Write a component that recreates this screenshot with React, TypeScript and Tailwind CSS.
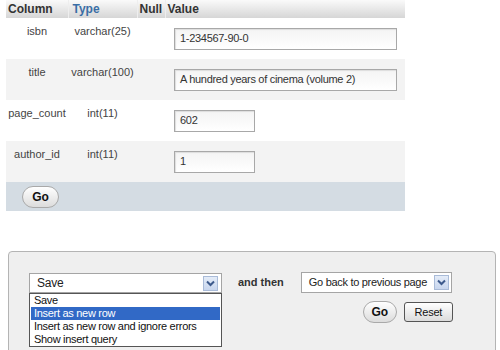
import React from "react";

const font = { fontFamily: '"Liberation Sans", Arial, sans-serif' };

function Chevron() {
  return (
    <span className="flex h-[15px] w-[15px] shrink-0 items-center justify-center border border-[#a9bbd8] bg-gradient-to-b from-[#e4ecf8] to-[#c8d6ee]">
      <svg width="9" height="7" viewBox="0 0 9 7">
        <path d="M1 1.5 L4.5 5 L8 1.5" stroke="#3d5a8c" strokeWidth="2" fill="none" />
      </svg>
    </span>
  );
}

function Row({ name, type, value, wide, shade }: { name: string; type: string; value: string; wide: boolean; shade: boolean }) {
  return (
    <tr className={shade ? "bg-[#f3f3f3]" : "bg-white"}>
      <td className="h-[41px] pt-[5px] align-top text-center text-[#444]">{name}</td>
      <td className="pt-[5px] align-top text-center text-[#444]">{type}</td>
      <td></td>
      <td className="pl-[9px] align-middle">
        <div
          className={`flex h-[22px] items-center border border-[#a8a8a8] bg-gradient-to-b from-[#f4f4f4] to-white pl-[5px] tracking-[-0.3px] text-[#333] shadow-[inset_1px_1px_1px_#ddd] ${wide ? "w-[223px]" : "w-[81px]"}`}
        >
          {value}
        </div>
      </td>
    </tr>
  );
}

export default function App() {
  return (
    <div className="h-[350px] w-[500px] overflow-hidden bg-white text-[11px]" style={font}>
      <table className="ml-[6px] w-[399px] table-fixed border-collapse">
        <colgroup>
          <col className="w-[62px]" />
          <col className="w-[69px]" />
          <col className="w-[28px]" />
          <col className="w-[240px]" />
        </colgroup>
        <thead>
          <tr className="h-[17px] bg-gradient-to-b from-[#fafafa] to-[#d6d6d6] text-[12px] font-bold">
            <th className="border-r border-[#eee] pl-[2px] text-left text-[#333]">Column</th>
            <th className="border-r border-[#eee] pl-[4px] text-left text-[#3a6ea5]">Type</th>
            <th className="border-r border-[#eee] pl-[2px] text-left text-[#333]">Null</th>
            <th className="pl-[2px] text-left text-[#333]">Value</th>
          </tr>
        </thead>
        <tbody>
          <Row name="isbn" type="varchar(25)" value="1-234567-90-0" wide shade={false} />
          <Row name="title" type="varchar(100)" value="A hundred years of cinema (volume 2)" wide shade />
          <Row name="page_count" type="int(11)" value="602" wide={false} shade={false} />
          <Row name="author_id" type="int(11)" value="1" wide={false} shade />
          <tr className="bg-[#d4dce3]">
            <td colSpan={4} className="h-[29px] pl-[16px]">
              <button className="flex h-[22px] w-[37px] items-center justify-center rounded-full border border-[#a9a9a9] bg-gradient-to-b from-white to-[#dcdcdc] text-[12px] font-bold text-[#111]">
                Go
              </button>
            </td>
          </tr>
        </tbody>
      </table>

      <div className="ml-[8px] mt-[40px] h-[110px] w-[488px] rounded-[4px] border border-[#b4b4b4] bg-[#efefef]">
        <div className="flex pl-[20px] pt-[20px]">
          <div className="relative">
            <div className="mt-[1px] flex h-[20px] w-[193px] items-center justify-between border border-[#a5a5a5] bg-white pl-[7px] pr-[3px] text-[12px] tracking-[-0.2px] text-[#222]">
              <span>Save</span>
              <Chevron />
            </div>
            <div className="absolute left-0 top-[21px] w-[193px] whitespace-nowrap border border-[#555] bg-white px-[1px] text-[11px] leading-[13px] tracking-[-0.3px] text-[#111]">
              <div className="pl-[3px]">Save</div>
              <div className="bg-[#3169c6] pl-[3px] text-white">Insert as new row</div>
              <div className="pl-[3px]">Insert as new row and ignore errors</div>
              <div className="pl-[3px]">Show insert query</div>
            </div>
          </div>
          <div className="ml-[16px] pt-[2px] text-[11px] font-bold text-[#333]">and then</div>
          <div className="ml-[17px] flex flex-col items-end">
            <div className="flex h-[21px] w-[151px] items-center justify-between whitespace-nowrap border border-[#a5a5a5] bg-white pl-[7px] pr-[2px] text-[11px] tracking-[-0.3px] text-[#222]">
              <span>Go back to previous page</span>
              <Chevron />
            </div>
            <div className="mr-[-1px] mt-[8px] flex items-center gap-[7px]">
              <button className="flex h-[22px] w-[34px] items-center justify-center rounded-full border border-[#a9a9a9] bg-gradient-to-b from-white to-[#dcdcdc] text-[12px] font-bold text-[#111]">
                Go
              </button>
              <button className="flex h-[20px] w-[49px] items-center justify-center rounded-[3px] border border-[#555] bg-gradient-to-b from-white to-[#dcdcdc] text-[11px] tracking-[-0.2px] text-[#111]">
                Reset
              </button>
            </div>
          </div>
        </div>
      </div>
    </div>
  );
}
